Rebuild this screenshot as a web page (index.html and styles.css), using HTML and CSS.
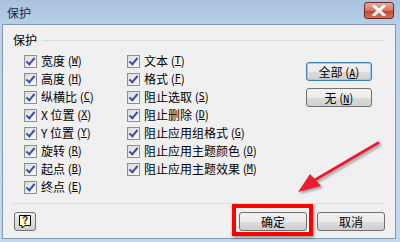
FILE: index.html
```html
<!DOCTYPE html>
<html lang="zh-CN">
<head>
  <meta charset="UTF-8" />
  <title>保护</title>
  <link rel="stylesheet" href="styles.css">
</head>
<body>
  <div class="window">
    <div class="titlebar">
      <span class="title">保护</span>
      <span class="close">
        <svg width="14" height="11" viewBox="0 0 14 11"><path d="M2 1 L12 10 M12 1 L2 10" stroke="#fff" stroke-width="3" stroke-linecap="square"/></svg>
      </span>
    </div>
    <div class="client">
      <div class="group-head"><span>保护</span><span class="rule"></span></div>
      <div class="group-body">
        <div class="col col-a">
          <label class="chk"><i class="box"></i>宽度 (<u>W</u>)</label>
          <label class="chk"><i class="box"></i>高度 (<u>H</u>)</label>
          <label class="chk"><i class="box"></i>纵横比 (<u>C</u>)</label>
          <label class="chk"><i class="box"></i>X 位置 (<u>X</u>)</label>
          <label class="chk"><i class="box"></i>Y 位置 (<u>Y</u>)</label>
          <label class="chk"><i class="box"></i>旋转 (<u>R</u>)</label>
          <label class="chk"><i class="box"></i>起点 (<u>B</u>)</label>
          <label class="chk"><i class="box"></i>终点 (<u>E</u>)</label>
        </div>
        <div class="col col-b">
          <label class="chk"><i class="box"></i>文本 (<u>T</u>)</label>
          <label class="chk"><i class="box"></i>格式 (<u>F</u>)</label>
          <label class="chk"><i class="box"></i>阻止选取 (<u>S</u>)</label>
          <label class="chk"><i class="box"></i>阻止删除 (<u>D</u>)</label>
          <label class="chk"><i class="box"></i>阻止应用组格式 (<u>G</u>)</label>
          <label class="chk"><i class="box"></i>阻止应用主题颜色 (<u>O</u>)</label>
          <label class="chk"><i class="box"></i>阻止应用主题效果 (<u>M</u>)</label>
        </div>
        <div class="col col-c">
          <button class="btn focus">全部 (<u>A</u>)</button>
          <button class="btn">无 (<u>N</u>)</button>
        </div>
      </div>
      <div class="footer">
        <button class="help">
          <svg width="14" height="15" viewBox="0 0 14 15"><path d="M1.5 1.5 H12.5 V11.5 H7 L4 14 V11.5 H1.5 Z" fill="#fffbb0" stroke="#000"/><text x="7" y="10" font-size="10" font-weight="bold" text-anchor="middle" font-family="Liberation Sans, sans-serif" fill="#1a1aa0">?</text></svg>
        </button>
        <div class="actions">
          <button class="btn wide">确定</button>
          <button class="btn wide">取消</button>
        </div>
      </div>
    </div>
    <div class="highlight"></div>
    <svg class="arrow" width="400" height="242" viewBox="0 0 400 242">
      <line x1="378" y1="143" x2="308" y2="184" stroke="#ec1c2e" stroke-width="3" stroke-linecap="round"/>
      <polygon points="298,192 310,174 321,186" fill="#ec1c2e"/>
    </svg>
  </div>
</body>
</html>
```

FILE: styles.css
```css
body {
  margin: 0;
}
.window {
  position: relative;
  width: 400px;
  height: 242px;
  display: flex;
  flex-direction: column;
  background: linear-gradient(#a9c2de, #bad2ea 30px, #c4daf0);
  font-family: "Noto Sans CJK SC", "Liberation Sans", sans-serif;
  font-size: 12px;
  color: #000;
}
.titlebar {
  height: 24px;
  flex: none;
  display: flex;
  align-items: center;
  justify-content: space-between;
  padding: 0 6px 0 7px;
}
.title {
  color: #1e2a3a;
  font-size: 12px;
}
.close {
  width: 28px;
  height: 15px;
  display: flex;
  align-items: center;
  justify-content: center;
  border: 1px solid #6e2b25;
  border-radius: 3px;
  background: linear-gradient(#e9aa9d, #d8755f 50%, #c5432f 51%, #d5705a);
  margin-top: -4px;
}
.client {
  flex: 1;
  margin: 0 4px 3px 2px;
  border: 1px solid #8798ab;
  background: #f0f0f0;
  display: flex;
  flex-direction: column;
  padding: 8px 0 0;
}
.group-head {
  display: flex;
  align-items: center;
  height: 14px;
  padding: 0 10px 0 10px;
  line-height: 14px;
}
.group-head .rule {
  flex: 1;
  margin-left: 5px;
  border-top: 1px solid #d5dfe5;
}
.group-body {
  display: flex;
  margin-top: 5px;
  padding-left: 21px;
  height: 144px;
}
.col {
  display: flex;
  flex-direction: column;
}
.col-a {
  width: 103px;
}
.col-b {
  width: 179px;
}
.col-c {
  padding-top: 10px;
  gap: 7px;
}
.chk {
  height: 18px;
  display: flex;
  align-items: center;
  white-space: nowrap;
  line-height: 18px;
}
.chk u, .btn u {
  font-family: "DejaVu Sans Mono", monospace;
  font-size: 10px;
}
.box {
  width: 11px;
  height: 11px;
  margin-right: 4px;
  border: 1px solid #8e8f8f;
  background: linear-gradient(135deg, #dcdcdc, #fbfbfb);
  position: relative;
  flex: none;
}
.box::after {
  content: "";
  position: absolute;
  left: 3px;
  top: 0px;
  width: 3px;
  height: 7px;
  border: solid #3a50a8;
  border-width: 0 2px 2px 0;
  transform: rotate(40deg);
}
.btn {
  width: 66px;
  height: 19px;
  padding: 0;
  border: 1px solid #707070;
  border-radius: 3px;
  background: linear-gradient(#f2f2f2, #ebebeb 50%, #dddddd 51%, #cfcfcf);
  font-family: inherit;
  font-size: 12px;
  line-height: 17px;
  color: #000;
}
.btn.focus {
  border-color: #3c7fb1;
  box-shadow: inset 0 0 0 1px #8fd3f6;
}
.footer {
  margin: 7px 10px 0;
  border-top: 1px solid #d5dfe5;
  padding-top: 8px;
  display: flex;
  justify-content: space-between;
}
.help {
  width: 22px;
  height: 19px;
  padding: 0;
  border: 1px solid #707070;
  border-radius: 3px;
  background: linear-gradient(#f2f2f2, #dddddd 51%, #cfcfcf);
  display: flex;
  align-items: center;
  justify-content: center;
  margin-left: 1px;
}
.actions {
  display: flex;
  gap: 10px;
}
.btn.wide {
  width: 68px;
}
.highlight {
  position: absolute;
  left: 232px;
  top: 204px;
  width: 73px;
  height: 24px;
  border: 4px solid #ff0000;
  box-shadow: 1px 2px 3px rgba(0, 0, 0, 0.35);
}
.arrow {
  position: absolute;
  left: 0;
  top: 0;
  filter: drop-shadow(2px 2px 1px rgba(0, 0, 0, 0.3));
}
```
